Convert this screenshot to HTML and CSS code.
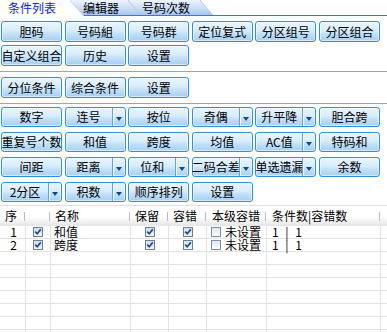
FILE: index.html
```html
<!DOCTYPE html>
<html lang="zh-CN">
<head>
    <meta charset="UTF-8">
    <meta name="viewport" content="width=device-width, initial-scale=1.0">
    <title>条件列表</title>
    <link rel="stylesheet" href="styles.css">
</head>
<body>

    <div class="tabs">
        <div class="tab active tab-1">条件列表</div>
        <div class="tab tab-2">编辑器</div>
        <div class="tab tab-3">号码次数</div>
        <div class="tab-rest"></div>
    </div>

    <div class="btn-grid big first">
        <button class="btn">胆码</button>
        <button class="btn">号码組</button>
        <button class="btn">号码群</button>
        <button class="btn">定位复式</button>
        <button class="btn">分区组号</button>
        <button class="btn">分区组合</button>
        <button class="btn">自定义组合</button>
        <button class="btn">历史</button>
        <button class="btn">设置</button>
    </div>

    <div class="sep"></div>

    <div class="btn-grid big">
        <button class="btn">分位条件</button>
        <button class="btn">综合条件</button>
        <button class="btn">设置</button>
    </div>

    <div class="sep"></div>

    <div class="btn-grid small">
        <button class="btn">数字</button>
        <button class="btn drop"><span class="label">连号</span><span class="arrow"></span></button>
        <button class="btn">按位</button>
        <button class="btn drop"><span class="label">奇偶</span><span class="arrow"></span></button>
        <button class="btn drop"><span class="label">升平降</span><span class="arrow"></span></button>
        <button class="btn">胆合跨</button>

        <button class="btn">重复号个数</button>
        <button class="btn">和值</button>
        <button class="btn">跨度</button>
        <button class="btn">均值</button>
        <button class="btn drop"><span class="label">AC值</span><span class="arrow"></span></button>
        <button class="btn">特码和</button>

        <button class="btn">间距</button>
        <button class="btn drop"><span class="label">距离</span><span class="arrow"></span></button>
        <button class="btn drop"><span class="label">位和</span><span class="arrow"></span></button>
        <button class="btn drop"><span class="label">二码合差</span><span class="arrow"></span></button>
        <button class="btn drop"><span class="label">单选遗漏</span><span class="arrow"></span></button>
        <button class="btn">余数</button>

        <button class="btn drop"><span class="label">2分区</span><span class="arrow"></span></button>
        <button class="btn drop"><span class="label">积数</span><span class="arrow"></span></button>
        <button class="btn">顺序排列</button>
        <button class="btn">设置</button>
    </div>

    <div class="list">
        <div class="list-head">
            <div class="cell c-no">序</div>
            <div class="cell c-on"></div>
            <div class="cell c-name">名称</div>
            <div class="cell c-keep">保留</div>
            <div class="cell c-err">容错</div>
            <div class="cell c-level">本级容错</div>
            <div class="cell c-count">条件数|容错数</div>
            <div class="cell c-end"></div>
        </div>

        <div class="row">
            <div class="cell c-no">1</div>
            <div class="cell c-on"><span class="cb checked"></span></div>
            <div class="cell c-name">和值</div>
            <div class="cell c-keep"><span class="cb checked"></span></div>
            <div class="cell c-err"><span class="cb checked"></span></div>
            <div class="cell c-level"><span class="cb"></span>未设置</div>
            <div class="cell c-count">1 | 1</div>
            <div class="cell c-end"></div>
        </div>
        <div class="row">
            <div class="cell c-no">2</div>
            <div class="cell c-on"><span class="cb checked"></span></div>
            <div class="cell c-name">跨度</div>
            <div class="cell c-keep"><span class="cb checked"></span></div>
            <div class="cell c-err"><span class="cb checked"></span></div>
            <div class="cell c-level"><span class="cb"></span>未设置</div>
            <div class="cell c-count">1 | 1</div>
            <div class="cell c-end"></div>
        </div>

        <!-- empty rows of the list -->
        <div class="row"><div class="cell c-no"></div><div class="cell c-on"></div><div class="cell c-name"></div><div class="cell c-keep"></div><div class="cell c-err"></div><div class="cell c-level"></div><div class="cell c-count"></div><div class="cell c-end"></div></div>
        <div class="row"><div class="cell c-no"></div><div class="cell c-on"></div><div class="cell c-name"></div><div class="cell c-keep"></div><div class="cell c-err"></div><div class="cell c-level"></div><div class="cell c-count"></div><div class="cell c-end"></div></div>
        <div class="row"><div class="cell c-no"></div><div class="cell c-on"></div><div class="cell c-name"></div><div class="cell c-keep"></div><div class="cell c-err"></div><div class="cell c-level"></div><div class="cell c-count"></div><div class="cell c-end"></div></div>
        <div class="row"><div class="cell c-no"></div><div class="cell c-on"></div><div class="cell c-name"></div><div class="cell c-keep"></div><div class="cell c-err"></div><div class="cell c-level"></div><div class="cell c-count"></div><div class="cell c-end"></div></div>
        <div class="row"><div class="cell c-no"></div><div class="cell c-on"></div><div class="cell c-name"></div><div class="cell c-keep"></div><div class="cell c-err"></div><div class="cell c-level"></div><div class="cell c-count"></div><div class="cell c-end"></div></div>
        <div class="row"><div class="cell c-no"></div><div class="cell c-on"></div><div class="cell c-name"></div><div class="cell c-keep"></div><div class="cell c-err"></div><div class="cell c-level"></div><div class="cell c-count"></div><div class="cell c-end"></div></div>
        <div class="row"><div class="cell c-no"></div><div class="cell c-on"></div><div class="cell c-name"></div><div class="cell c-keep"></div><div class="cell c-err"></div><div class="cell c-level"></div><div class="cell c-count"></div><div class="cell c-end"></div></div>
    </div>

</body>
</html>
```

FILE: styles.css
```css
body {
    margin: 0;
    padding: 0;
    width: 387px;
    height: 332px;
    overflow: hidden;
    background: #fff;
    color: #000;
    font-family: "Noto Sans CJK SC", "Noto Sans", sans-serif;
    font-size: 12px;
}

/* tab strip */
.tabs {
    display: flex;
    height: 16px;
}

.tab {
    box-sizing: border-box;
    height: 16px;
    line-height: 15px;
    white-space: nowrap;
    border-bottom: 1px solid #3f6fe0;
    background:
        linear-gradient(to top right, transparent calc(50% - 1px), #7ea4e6 50%, transparent calc(50% + 1px)) right top / 14px 100% no-repeat,
        linear-gradient(#eef4fd, #c6daf5 60%, #a9c4ee);
    clip-path: polygon(0 0, calc(100% - 14px) 0, 100% 100%, 0 100%);
}

.tab.active {
    color: #0a22f0;
    border-bottom: none;
    background:
        linear-gradient(to top right, transparent calc(50% - 1px), #9dbbea 50%, transparent calc(50% + 1px)) right top / 14px 100% no-repeat,
        #fff;
}

.tab-1 {
    width: 84px;
    padding-left: 8px;
    z-index: 3;
}

.tab-2 {
    width: 76px;
    margin-left: -18px;
    padding-left: 17px;
    z-index: 2;
}

.tab-3 {
    width: 86px;
    margin-left: -14px;
    padding-left: 14px;
    z-index: 1;
}

.tab-rest {
    flex: 1;
    margin-left: -14px;
    box-sizing: border-box;
    height: 16px;
    border-bottom: 1px solid #3f6fe0;
}

/* button blocks */
.btn-grid {
    display: grid;
    grid-template-columns: repeat(6, 61px);
    column-gap: 2.6px;
    padding-left: 1px;
}

.btn-grid.big {
    grid-auto-rows: 21px;
    row-gap: 3px;
    margin-top: 4px;
}

.btn-grid.big.first {
    margin-top: 5px;
}

.btn-grid.small {
    grid-auto-rows: 20px;
    row-gap: 5px;
    margin-top: 2px;
}

.btn {
    display: flex;
    align-items: center;
    justify-content: center;
    box-sizing: border-box;
    margin: 0;
    padding: 0;
    min-width: 0;
    font-family: inherit;
    font-size: 12px;
    line-height: 14px;
    color: #000;
    white-space: nowrap;
    border: 1px solid #2a92dc;
    border-radius: 3px;
    background: linear-gradient(#eaf5fe 0%, #d8ecfc 45%, #c2e0f8 62%, #a7cff1 100%);
    box-shadow: inset 0 0 0 1px rgba(255, 255, 255, 0.55);
}

.btn.drop {
    justify-content: stretch;
}

.btn .label {
    flex: 1;
    display: flex;
    justify-content: center;
    min-width: 0;
}

.btn .arrow {
    display: flex;
    align-items: center;
    justify-content: center;
    width: 13px;
    height: 100%;
    border-left: 1px solid #5fa4e2;
    box-shadow: inset 1px 0 0 #f4faff;
    padding-top: 3px;
    box-sizing: border-box;
}

.btn .arrow::after {
    content: "";
    border-left: 3.5px solid transparent;
    border-right: 3.5px solid transparent;
    border-top: 4px solid #15458c;
}

.sep {
    height: 1px;
    margin-top: 5px;
    background: #a3a3a3;
    border-bottom: 1px solid #fff;
}

/* list */
.list {
    margin-top: 3px;
    border-top: 1px solid #e2e2e2;
}

.list-head,
.row {
    display: flex;
}

.cell {
    box-sizing: border-box;
    white-space: nowrap;
}

.c-no { width: 26px; }
.c-on { width: 25px; }
.c-name { width: 80px; }
.c-keep { width: 38px; }
.c-err { width: 38px; }
.c-level { width: 60px; }
.c-count { width: 114px; }
.c-end { flex: 1; }

.list-head {
    height: 20px;
    background: linear-gradient(#fff 0%, #fff 55%, #f1f1f1 80%, #e4e4e4 100%);
}

.list-head .cell {
    position: relative;
    padding-left: 4px;
    line-height: 20px;
}

.list-head .cell::after {
    content: "";
    position: absolute;
    right: 1px;
    top: 6px;
    width: 1px;
    height: 9px;
    background: #bdbdbd;
}

.list-head .c-end::after {
    display: none;
}

.list-head .c-no,
.list-head .c-level,
.list-head .c-count {
    padding-left: 5px;
}

.row {
    height: 13px;
}

.row .cell {
    height: 13px;
    line-height: 12px;
    border-right: 1px solid #e3e3e3;
    border-bottom: 1px solid #e3e3e3;
}

.row .c-end {
    border-right: none;
}

.row .c-no {
    text-align: center;
    padding-left: 2px;
}

.row .c-on,
.row .c-keep,
.row .c-err {
    display: flex;
    align-items: center;
    justify-content: center;
}

.row .c-name {
    padding-left: 3px;
}

.row .c-level {
    display: flex;
    align-items: center;
    padding-left: 4px;
}

.row .c-count {
    padding-left: 5px;
    word-spacing: 4px;
}

/* check boxes */
.cb {
    display: inline-block;
    flex: none;
    box-sizing: border-box;
    width: 10px;
    height: 10px;
    margin-right: 4px;
    border: 1px solid #7d8fa5;
    background: linear-gradient(#dfe7f0, #fbfcfe);
}

.c-on .cb,
.c-keep .cb,
.c-err .cb {
    margin-right: 0;
}

.cb.checked {
    border-color: #707e8e;
    background:
        url("data:image/svg+xml,%3Csvg xmlns='http://www.w3.org/2000/svg' width='8' height='8'%3E%3Cpolyline points='1.2,3.6 3.2,5.8 6.8,1.4' fill='none' stroke='%231b4d8e' stroke-width='1.7'/%3E%3C/svg%3E") center / 8px 8px no-repeat,
        linear-gradient(#cfe0f2, #eef5fc);
}
```
